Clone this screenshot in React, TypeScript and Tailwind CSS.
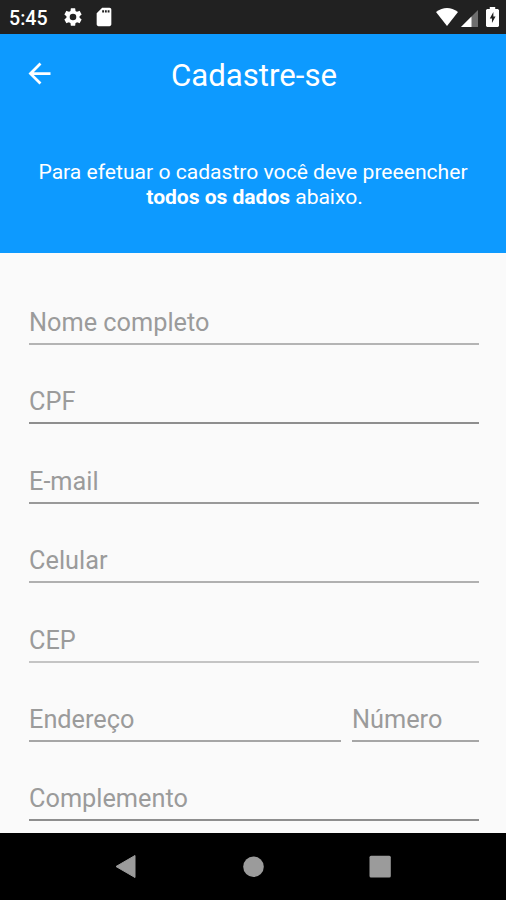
import type { ReactNode } from "react";

interface FieldProps {
    label: string;
    className?: string;
    lineColor?: string;
}

function Field({ label, className = "w-full", lineColor = "border-[#a6a6a6]" }: FieldProps) {
    return (
        <div className={`h-[79.4px] shrink-0 ${className}`}>
            <div className={`h-[50px] border-b-2 pt-[13px] pl-[0.5px] text-[25.3px] leading-[30px] text-[#9b9b9b] whitespace-nowrap ${lineColor}`}>
                {label}
            </div>
        </div>
    );
}

function StatusBar() {
    return (
        <div className="h-[34px] shrink-0 bg-[#212121] text-white flex items-center justify-between pl-[9px] pr-[7px]">
            <div className="flex items-center">
                <span className="w-[53px] pt-[3px] text-[19.6px] font-medium leading-none">5:45</span>
                <svg className="size-[22px]" viewBox="0 0 24 24" fill="currentColor">
                    <path d="M19.14 12.94c.04-.3.06-.61.06-.94s-.02-.64-.07-.94l2.03-1.58a.49.49 0 0 0 .12-.61l-1.92-3.32a.49.49 0 0 0-.59-.22l-2.39.96a7 7 0 0 0-1.62-.94l-.36-2.54a.48.48 0 0 0-.48-.41h-3.84a.48.48 0 0 0-.47.41l-.36 2.54c-.59.24-1.13.57-1.62.94l-2.39-.96a.48.48 0 0 0-.59.22L2.74 8.87a.48.48 0 0 0 .12.61l2.03 1.58c-.05.3-.09.63-.09.94s.02.64.07.94l-2.03 1.58a.49.49 0 0 0-.12.61l1.92 3.32c.12.22.37.29.59.22l2.39-.96c.5.38 1.03.7 1.62.94l.36 2.54c.05.24.24.41.48.41h3.84c.24 0 .44-.17.47-.41l.36-2.54a7 7 0 0 0 1.62-.94l2.39.96c.22.08.47 0 .59-.22l1.92-3.32a.48.48 0 0 0-.12-.61zM12 15.6a3.6 3.6 0 1 1 0-7.2 3.6 3.6 0 0 1 0 7.2z" />
                </svg>
                <svg className="size-[22px] ml-[9px]" viewBox="0 0 24 24" fill="currentColor">
                    <path d="M18 2h-8L4 8v12c0 1.1.9 2 2 2h12c1.1 0 2-.9 2-2V4c0-1.1-.9-2-2-2zm-6 5h-2V4.500h2V7zm3 0h-2V4.500h2V7zm3 0h-2V4.500h2V7z" />
                </svg>
            </div>
            <div className="flex items-center">
                <svg className="w-[22px] h-[18px]" viewBox="0 0 22 18" fill="currentColor">
                    <path d="M11 18 0 4Q11-4 22 4z" />
                </svg>
                <svg className="size-[17px] ml-[3px] mt-0.5" viewBox="0 0 17 17" fill="currentColor">
                    <path d="M0 17 17 0v17z" opacity=".35" />
                    <path d="M0 17 10.500 6.500V17z" />
                </svg>
                <svg className="w-[13px] h-[20px] ml-2" viewBox="0 0 12 20" preserveAspectRatio="none">
                    <path d="M1 2h2.500V0h5v2H11l1 1v16l-1 1H1l-1-1V3z" fill="currentColor" />
                    <path d="M6.800 5 3.500 11.500h2V16l3.300-6.500h-2z" fill="#212121" />
                </svg>
            </div>
        </div>
    );
}

function Header({ children }: { children: ReactNode }) {
    return (
        <header className="h-[219px] shrink-0 bg-[#0d9aff] text-white">
            <div className="h-20 grid grid-cols-[80px_1fr_80px] items-center">
                <svg className="size-[33px] ml-[23px] -mt-px" viewBox="0 0 24 24" fill="currentColor">
                    <path d="M20 11H7.830l5.590-5.590L12 4l-8 8 8 8 1.410-1.410L7.830 13H20v-2z" />
                </svg>
                <h1 className="text-center text-[31.2px] leading-10 pt-1 pl-0.5">Cadastre-se</h1>
            </div>
            <p className="mt-[45px] text-center text-[21.1px] leading-[25px]">{children}</p>
        </header>
    );
}

function NavigationBar() {
    return (
        <nav className="h-[67px] shrink-0 bg-black">
            <svg className="w-full h-full" viewBox="0 0 506 67" fill="#9b9b9b">
                <path d="M116 33.500 135 22.500v22z" stroke="#9b9b9b" strokeLinejoin="round" />
                <circle cx="253.500" cy="33.800" r="10.300" />
                <rect x="369.500" y="22.800" width="21.300" height="21.700" rx="1.500" />
            </svg>
        </nav>
    );
}

export default function App() {
    return (
        <div className="w-[506px] h-[900px] flex flex-col overflow-hidden bg-[#fafafa] font-['Roboto',sans-serif]">
            <StatusBar />
            <Header>
                Para efetuar o cadastro você deve preeencher
                <br />
                <span className="pl-[3px] tracking-[-0.05px]">
                    <strong className="font-bold">todos os dados</strong> abaixo.
                </span>
            </Header>
            <main className="flex-1 min-h-0 overflow-hidden pl-[28.5px] pr-[27.5px] pt-[42px]">
                <Field label="Nome completo" lineColor="border-[#b4b4b4]" />
                <Field label="CPF" lineColor="border-[#8e8e8e]" />
                <Field label="E-mail" lineColor="border-[#999999]" />
                <Field label="Celular" lineColor="border-[#b0b0b0]" />
                <Field label="CEP" lineColor="border-[#c4c4c4]" />
                <div className="flex gap-[11px]">
                    <Field label="Endereço" className="w-[312px]" />
                    <Field label="Número" className="flex-1" />
                </div>
                <Field label="Complemento" lineColor="border-[#8e8e8e]" />
            </main>
            <NavigationBar />
        </div>
    );
}
